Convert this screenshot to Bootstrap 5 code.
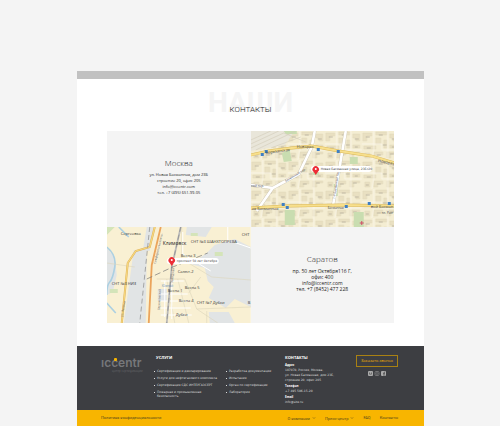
<!DOCTYPE html>
<html lang="ru">
<head>
<meta charset="utf-8">
<meta name="viewport" content="width=device-width, initial-scale=1">
<title>Контакты — iccentr</title>
<link href="https://cdn.jsdelivr.net/npm/bootstrap@5.3.0/dist/css/bootstrap.min.css" rel="stylesheet">
<style>
body{background:#f4f4f4;font-family:"Open Sans","Noto Sans",sans-serif;color:#3e3f43;min-height:100vh}
a,button{color:inherit;text-decoration:none}
.sheet{margin:71px 76px 0 77px;min-height:calc(100vh - 71px);background:#fff}
.topbar{height:8px;background:#c1c1c1}
.page-head{padding-top:9px;height:52px;font-family:Roboto,sans-serif}
.page-head h1{display:grid;justify-items:center;line-height:30px;margin:0}
.page-head span{grid-area:1/1}
.ghost{font-size:28px;font-weight:700;color:#f5f5f5}
.title{font-size:8px;font-weight:300;padding-top:7px;color:#222}
.offices{padding:0 30px}
.tile{background:#f4f4f4;min-height:96px;padding-bottom:6px}
.tile h2{font-size:8px;line-height:11px;font-weight:300;margin:0 0 4px;color:#222}
.tile address{font-size:4px;line-height:6px;margin:0;color:#222}
.tile .large{font-size:5px;line-height:6px}
.map{display:block;width:100%;height:96px}
.map-label{font:3px "DejaVu Sans",sans-serif;fill:#444}
.site-foot{background:#3d3e42;color:#dcdcdc;padding:9px 26px 4px 24px;margin-top:23px;min-height:64px;font:3px/4px "DejaVu Sans",sans-serif}
.foot-grid{display:grid;grid-template-columns:55fr 129fr 71fr 42fr}
.site-foot h3{font:700 4px/6px "Open Sans",sans-serif;color:#fff;margin:0}
.services{display:grid;grid-template-columns:72fr 57fr;margin-top:8px}
.services ul{list-style:none;padding:0 0 0 1px;margin:0}
.services li{margin-bottom:3px;position:relative;white-space:nowrap}
.services li::before{content:"";position:absolute;left:-3px;top:2px;width:1px;height:1px;background:#ddd}
.contacts dl{margin:2px 0 0}
.contacts dt{color:#fff;line-height:5px;font-family:"Open Sans",sans-serif}
.contacts dd{margin:0 0 1px;line-height:5px}
.logo{display:block;font:600 12px/15px Inter,sans-serif;color:#76777a;position:relative}
.logo small{display:block;font:3px/3px "Open Sans",sans-serif;padding-left:11px;color:#66676a}
.logo i{position:absolute;left:13px;top:3px;width:3px;height:3px;background:#f8b500;border-radius:1px}
.call{border:1px solid #a98113;background:none;color:#f8b500;font:4px/8px "Open Sans",sans-serif;padding:1px 0;width:100%;display:block}
.bottom{background:#f8b500;padding:0 26px 0 24px;font-size:4px;line-height:15px;min-height:16px;font-family:Roboto,sans-serif;color:#57481d}
.bottom nav{gap:9px}
.bottom button{border:0;background:none;padding:0}
.bottom svg{margin-left:2px}
</style>
<script src="https://cdn.jsdelivr.net/npm/bootstrap@5.3.0/dist/js/bootstrap.bundle.min.js"></script>
</head>
<body>
<div class="sheet d-flex flex-column">
<header class="topbar"></header>
<main>
<div class="page-head"><h1><span class="ghost">НАШИ</span><span class="title">КОНТАКТЫ</span></h1></div>
<section class="offices"><div class="row g-0">
<div class="col-6 tile text-center d-flex flex-column justify-content-center">
<h2>Москва</h2>
<address>ул. Новая Басманная, дом 23Б<br>строение 20, офис 205<br><a href="mailto:info@iccentr.com">info@iccentr.com</a><br>тел. +7 (495) 651-99-05</address>
</div>
<div class="col-6">
<svg class="map" viewBox="0 0 144 96" preserveAspectRatio="xMidYMid slice" role="img" aria-label="Карта: Москва" font-family="Open Sans, sans-serif">
<defs><pattern id="blocks" width="37" height="29" patternUnits="userSpaceOnUse">
<path fill="#e9e0c2" stroke="#ddd4b4" stroke-width=".4" d="M1 2h9v3H5v5H1zM14 1h11v3H14zM14 7h5v6h-5zM28 3h7v7h-4V7h-3zM2 15h12v3H2zM22 9h3v8h-3zM28 14h7v3h-7zM3 22h5v5H3zM12 21h9v3h-5v3h-4zM25 21h10v2h-6v4h-4z"/>
<path stroke="#fbf8ec" stroke-width=".8" fill="none" d="M12 0v19l-2 10M0 13h20v6h17M26 0v29"/>
<path stroke="#b5ae9c" stroke-width=".8" d="M4 6h4M17 4h4M30 8h4M5 17h4M21 14h4M30 16h3M4 25h3M15 24h4M28 23h4"/></pattern></defs>
<path fill="#f4edd2" d="M0 0h144v96H0z"/><path fill="url(#blocks)" d="M0 0h144v96H0z"/>
<path fill="#e9e6da" d="M0 0h44L34 14 0 20z"/>
<path fill="#c9ddb0" d="M31 22l8-3 2 11-8 1zM33 0h13v3H35zM83 53h4v12h-4zM34 79h10v15H34zM103 81h10v15h-10zM99 26h8v7h-8zM62 40h6v4h-6z"/>
<path fill="none" stroke="#d2cbb8" stroke-width=".6" d="M0 17L33 2 55 11M0 13L28 0M5 19L45 0M0 9L20 0M20 17L50 6"/>
<g fill="none" stroke="#cfc8b5" stroke-width="3.400"><path d="M64 0L61 16 48 43 22 57 6 80M95 0L82 76M0 54l22 3"/></g>
<g fill="none" stroke="#fff" stroke-width="2.600"><path d="M64 0L61 16 48 43 22 57 6 80M95 0L82 76M0 54l22 3"/></g>
<g fill="none" stroke="#dcb95a" stroke-width="2.800"><path d="M0 24l18-4 23-3 20-2 27 5 33 5 23 7M0 77l35-2 58-1 51 1"/></g>
<g fill="none" stroke="#f7df8c" stroke-width="2"><path d="M0 24l18-4 23-3 20-2 27 5 33 5 23 7M0 77l35-2 58-1 51 1"/></g>
<g fill="#3f7fc4"><path d="M10 22h3v3h-3zM14 19h3v3h-3zM66 17h3v3h-3zM86 19h3v3h-3zM31 72h3v3h-3zM35 75h3v3h-3zM94 74h3v3h-3zM117 71h3v3h-3zM137 71h3v3h-3z"/></g>
<g font-size="4" fill="#444"><text x="15" y="23" transform="rotate(-7 15 23)">ворязанская</text><text x="46" y="17">Новоряз</text><text x="127" y="31" transform="rotate(12 127 31)">Новоряз</text><text x="35" y="51" font-size="3" transform="rotate(-31 35 51)">Басманный пер.</text><text x="84" y="68" font-size="3" transform="rotate(-81 84 68)">1-й Басманный пер.</text><text x="1" y="79">ая Басманная</text><text x="77" y="78" font-size="3">Басманная</text><text x="120" y="77">вой Басман</text><text x="131" y="83" font-size="3">пл. Разг</text><text x="0" y="56" font-size="3">ный пер.</text></g>
<path stroke="#d24b64" d="M109 92h4m-2-2v4"/>
<rect x="60" y="35" width="61" height="6" rx="3" fill="#fff"/><text x="70" y="39" class="map-label">Новая Басманная улица, 23Бс20</text>
<path fill="#ed2d36" d="M65 44l-2-3a3.200 3.200 0 1 1 4 0z"/><circle cx="65" cy="38" r="1" fill="#fff"/>
</svg></div>
<div class="col-6">
<svg class="map" viewBox="0 0 144 96" preserveAspectRatio="xMidYMid slice" role="img" aria-label="Карта: проспект 50 лет Октября" font-family="Open Sans, sans-serif">
<path fill="#f9f0d3" d="M0 0h144v96H0z"/>
<path fill="#e1e4e5" d="M27 23h13l-1 73H17zM40 0h7l-4 24H36zM100 26l8-8 20-6 16 8v60l-16-8-9 9-17-10 5-11-6-6-3-13-14-4zM80 0h25l-6 10-20-2zM51 62h9v12h-9zM0 21l8 9 2 18-4 17-6 3zM102 85h20l6 11h-25z"/>
<path fill="#d4e4b9" d="M0 0h8l-8 8zM108 25h8v4h-8zM84 6h7v3h-7zM3 62h8v4H3z"/>
<path fill="none" stroke="#acd0e2" stroke-width="1.600" d="M0 20q10 8 8 20t-5 15-3 13M0 76l9 10M12 0l10 10"/>
<g fill="none" stroke="#dcd5ba" stroke-width=".6"><path d="M50 52h28l12 30 54-2M60 52l8 44M71 52l11 44M75 0v32l30 18 39 3M90 82l21 14M94 50l-12 16M100 84v12M0 36l28 4"/></g>
<g fill="none" stroke="#fff" stroke-width="1"><path d="M54 54h23M54 67h27M54 74h28M54 81h30M54 88h31M58 54v36M65 54v38M76 5v22l28 17M121 0v13l23 8"/></g>
<path fill="none" stroke="#dcae58" stroke-width="2" d="M48 0l-5 20-14 4-8 12-6 60"/><path fill="none" stroke="#f6d67c" stroke-width="1.300" d="M48 0l-5 20-14 4-8 12-6 60"/>
<path fill="none" stroke="#eba45c" stroke-width="1.800" d="M54 0L45 38l-3 58"/>
<path fill="none" stroke="#bbb" stroke-width="1.800" d="M74 0L65 40l-5 56"/><path fill="none" stroke="#888" stroke-width=".7" stroke-dasharray="5 3" d="M74 0L65 40l-5 56M43 0L33 96"/>
<path fill="none" stroke="#777" stroke-width=".7" stroke-dasharray="6 3" d="M40 52l26-12 35-14"/>
<g font-size="4" fill="#333"><text x="14" y="8">Сергеевка</text><text x="56" y="18" font-size="5" fill="#222">Климовск</text><text x="84" y="16">СНТ №3 ШАНХТОПРЕВА</text><text x="135" y="9">СНТ</text><text x="74" y="30">Весна 3</text><text x="71" y="46">Салют-2</text><text x="5" y="58">СНТ №3 НИЗ</text><text x="61" y="65">Весна 1</text><text x="78" y="62">Весна 5</text><text x="72" y="75">Весна 4</text><text x="90" y="77">СНТ №7 Дубки</text><text x="69" y="89">Дубки</text><text x="141" y="77">В</text><text x="55" y="60" font-size="3" fill="#6b8fb5">Южный</text><g font-size="3" fill="#666"><text x="49" y="37" transform="rotate(-77 49 37)">Симферопольское ш.</text><text x="53" y="83" transform="rotate(-87 53 83)">Бережковский</text><text x="66" y="56" transform="rotate(-84 66 56)">Заводская</text><text x="16" y="90" transform="rotate(-80 16 90)">ул. Ленина</text></g></g>
<rect x="60" y="31" width="52" height="6" rx="3" fill="#fff"/><text x="70" y="35" class="map-label">проспект 50 лет Октября</text>
<path fill="#ed2d36" d="M65 39l-2-3a3.200 3.200 0 1 1 4 0z"/><circle cx="65" cy="33" r="1" fill="#fff"/>
</svg></div>
<div class="col-6 tile text-center d-flex flex-column justify-content-center">
<h2>Саратов</h2>
<address class="large">пр. 50 лет Октября116 Г,<br>офис 400<br><a href="mailto:info@iccentr.com">info@iccentr.com</a><br>тел. +7 (8452) 477 228</address>
</div>
</div></section>
</main>
<footer class="flex-grow-1 d-flex flex-column">
<div class="site-foot"><div class="foot-grid">
<a class="logo" href="#">ıccentr<i></i><small>центр сертификации</small></a>
<section><h3>УСЛУГИ</h3><div class="services">
<ul><li>Сертификация и декларирование</li><li>Услуги для нефтегазового комплекса</li><li>Сертификация СДС ИНТЕРГАЗСЕРТ</li><li>Пожарная и промышленная<br>безопасность</li></ul>
<ul><li>Разработка документации</li><li>Испытания</li><li>Орган по сертификации</li><li>Лаборатория</li></ul>
</div></section>
<section class="contacts"><h3>КОНТАКТЫ</h3><dl><dt>Адрес</dt><dd>107078, Россия, Москва,<br>ул. Новая Басманная, дом 23Б,<br>строение 20, офис 205</dd><dt>Телефон</dt><dd>+7 495 506-15-20</dd><dt>Email</dt><dd>info@site.ru</dd></dl></section>
<div><button class="call" type="button">Заказать звонок</button>
<div class="d-flex justify-content-center mt-1">
<svg width="18" height="5" viewBox="0 0 18 5" role="img" aria-label="Социальные сети"><rect width="5" height="5" rx="1" fill="#aaa"/><path d="M1.500 1.500v1.700h2V1.500" stroke="#555" fill="none" stroke-width=".7"/><rect x="7" y=".5" width="4" height="4" rx="1" fill="none" stroke="#888" stroke-width=".7"/><circle cx="9" cy="2.500" r="1" fill="none" stroke="#888" stroke-width=".6"/><rect x="13" width="5" height="5" rx="1" fill="#aaa"/><path d="M17 1.200h-1V5M15 2.700h2" stroke="#444" fill="none" stroke-width=".7"/></svg>
</div></div>
</div></div>
<div class="bottom d-flex justify-content-between flex-grow-1">
<a href="#">Политика конфиденциальности</a>
<nav class="d-flex"><button type="button">О компании<svg width="4" height="2" viewBox="0 0 4 2"><path d="M.5.300L2 1.500 3.500.300" stroke="#57481d" stroke-width=".4" fill="none"/></svg></button><button type="button">Пресс-центр<svg width="4" height="2" viewBox="0 0 4 2"><path d="M.5.300L2 1.500 3.500.300" stroke="#57481d" stroke-width=".4" fill="none"/></svg></button><a href="#">FAQ</a><a href="#">Контакты</a></nav>
</div>
</footer>
</div>
</body>
</html>
